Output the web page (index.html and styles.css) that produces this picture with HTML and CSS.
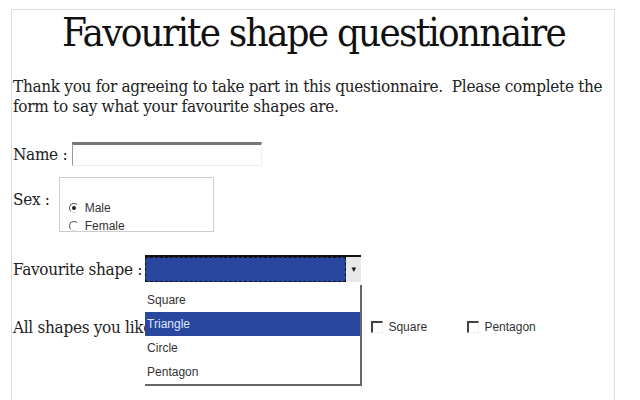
FILE: index.html
```html
<!DOCTYPE html>
<html lang="en">
<head>
    <meta charset="UTF-8">
    <meta name="viewport" content="width=device-width, initial-scale=1.0">
    <title>Favourite shape questionnaire</title>
    <link rel="stylesheet" href="styles.css">
</head>
<body>
    <div id="page">
        <h1>Favourite shape questionnaire</h1>

        <p class="intro">Thank you for agreeing to take part in this questionnaire.&nbsp; Please complete the form to say what your favourite shapes are.</p>

        <form id="survey">
            <div class="row name-row">
                <label for="name">Name :</label>
                <input type="text" id="name" class="text-box">
            </div>

            <div class="row sex-row">
                <span class="label">Sex :</span>
                <div class="choice-box">
                    <div class="choice"><span class="radio checked"></span>Male</div>
                    <div class="choice"><span class="radio"></span>Female</div>
                </div>
            </div>

            <div class="row shape-row">
                <span class="label">Favourite shape :</span>
                <div class="select">
                    <div class="select-value"></div>
                    <div class="select-arrow">&#9662;</div>
                    <!-- open dropdown list -->
                    <ul class="select-list">
                        <li>Square</li>
                        <li class="selected">Triangle</li>
                        <li>Circle</li>
                        <li>Pentagon</li>
                    </ul>
                </div>
            </div>

            <div class="row all-row">
                <span class="label">All shapes you like :</span>
                <div class="checks">
                    <div class="check-item"><span class="checkbox"></span>Square</div>
                    <div class="check-item"><span class="checkbox"></span>Pentagon</div>
                </div>
            </div>
        </form>
    </div>
</body>
</html>
```

FILE: styles.css
```css
body {
    margin: 0;
    padding: 0;
    background-color: white;
    color: #222;
    font-family: "DejaVu Serif Condensed", "DejaVu Serif", serif;
    font-stretch: condensed;
}

#page {
    margin: 9px 0 0 11px;
    width: 601px;
    min-height: 420px;
    border: 1px solid #ddd;
    border-bottom: none;
    padding-left: 1px;
}

h1 {
    margin: 0;
    text-align: center;
    font-weight: normal;
    font-size: 40px;
    letter-spacing: -1.8px;
    line-height: 44px;
    color: #111;
}

.intro {
    margin: 22px 0 0 0;
    font-size: 17px;
    letter-spacing: -0.3px;
    line-height: 20px;
}

.row {
    display: flex;
    align-items: flex-start;
    font-size: 17px;
    letter-spacing: -0.3px;
}

.label, label {
    line-height: 22px;
}

.name-row {
    margin-top: 26px;
    align-items: center;
}

.text-box {
    width: 190px;
    height: 24px;
    margin: 0 0 0 5px;
    padding: 0;
    border: 1px solid #eee;
    border-top: 3px solid #777;
    border-left: 1px solid #999;
    box-sizing: border-box;
}

.sex-row {
    margin-top: 11px;
}

.sex-row .label {
    margin-top: 11px;
}

.choice-box {
    margin-left: 9px;
    width: 155px;
    height: 55px;
    border: 1px solid #ccc;
    box-sizing: border-box;
    overflow: hidden;
    padding: 21px 0 0 9px;
    font-family: "Liberation Sans", Arial, sans-serif;
    font-stretch: normal;
    font-size: 12px;
    letter-spacing: 0;
}

.choice {
    display: flex;
    align-items: center;
    height: 18px;
    color: #333;
}

.radio {
    width: 8px;
    height: 8px;
    border-radius: 50%;
    border: 1px solid #555;
    border-right-color: #fff;
    border-bottom-color: #ddd;
    margin-right: 6px;
    position: relative;
}

.radio.checked::after {
    content: "";
    position: absolute;
    left: 2px;
    top: 2px;
    width: 4px;
    height: 4px;
    border-radius: 50%;
    background-color: #222;
}

.shape-row {
    margin-top: 23px;
    align-items: center;
}

.select {
    position: relative;
    display: flex;
    width: 216px;
    height: 27px;
    margin-left: 3px;
    border-top: 2px solid #111;
    box-sizing: border-box;
}

.select-value {
    flex: 1;
    background-color: #2a47a0;
    outline: 1px dashed #111;
    outline-offset: -1px;
}

.select-arrow {
    width: 15px;
    background-color: #e8e8e8;
    font-family: "DejaVu Sans", sans-serif;
    font-stretch: normal;
    font-size: 9px;
    line-height: 25px;
    text-align: center;
    color: #111;
}

.select-list {
    position: absolute;
    left: 0;
    top: 28px;
    width: 215px;
    margin: 0;
    padding: 3px 0 0 0;
    list-style: none;
    background-color: white;
    border-right: 2px solid #666;
    border-bottom: 2px solid #666;
    font-family: "Liberation Sans", Arial, sans-serif;
    font-stretch: normal;
    font-size: 12px;
    letter-spacing: 0;
    z-index: 2;
}

.select-list li {
    height: 24px;
    line-height: 24px;
    padding-left: 2px;
    color: #333;
}

.select-list li.selected {
    background-color: #2a47a0;
    color: #dfe6ff;
}

.all-row {
    margin-top: 34px;
    align-items: center;
}

.checks {
    display: flex;
    margin-left: 210px;
    font-family: "Liberation Sans", Arial, sans-serif;
    font-stretch: normal;
    font-size: 12px;
    letter-spacing: 0;
    color: #333;
}

.check-item {
    display: flex;
    align-items: center;
    width: 96px;
}

.checkbox {
    width: 9px;
    height: 9px;
    border: 1px solid #eee;
    border-top: 2px solid #444;
    border-left: 2px solid #444;
    margin-right: 5px;
}
```
